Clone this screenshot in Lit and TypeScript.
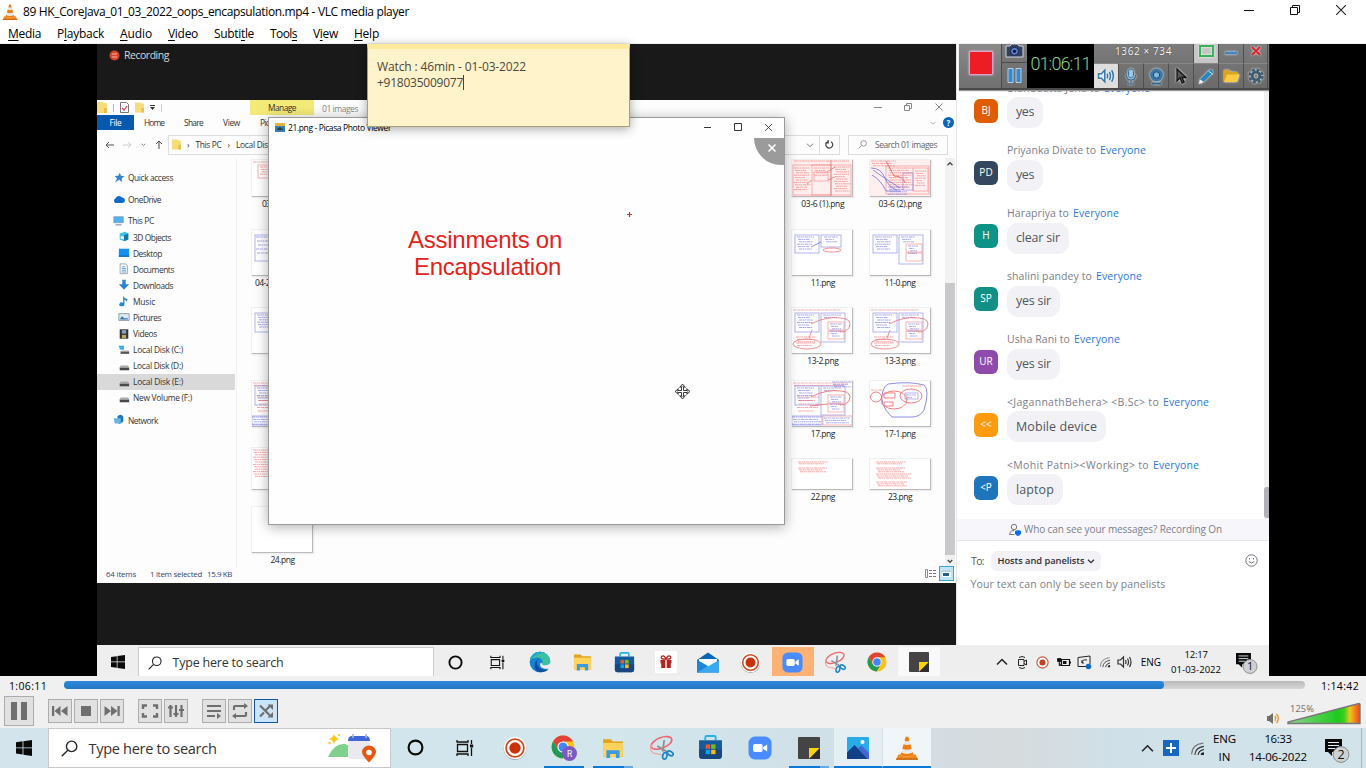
import { LitElement, html, css, svg, nothing } from "lit";
import { customElement, property } from "lit/decorators.js";

/** Text run whose letter spacing is tuned so that it fills a given width. */
@customElement("fit-text")
class FitText extends LitElement {
  @property({ type: Number }) w = 0;
  static styles = css`:host { display: inline-block; white-space: pre; flex: none; }`;
  firstUpdated() {
    const r = document.createRange();
    r.selectNodeContents(this);
    const n = (this.textContent || "").length;
    const nat = r.getBoundingClientRect().width;
    if (n && nat && this.w) {
      this.style.letterSpacing = (this.w - nat) / n + "px";
      this.style.width = this.w + "px";
    }
  }
  render() { return html`<slot></slot>`; }
}

const T = (text: any, w: number, cls = "") => html`<fit-text class=${cls} w=${w}>${text}</fit-text>`;
const I = (w: number, h: number, vb: string, body: any) =>
  html`<svg width=${w} height=${h} viewBox=${vb}>${body}</svg>`;

const cone = (s: number) => I(s, s, "0 0 22 22", svg`
  <path d="M3 17h16l2 4.5H1z" fill="#f08a1c"/><path d="M1 20.6h20v1.2H1z" fill="#c35f08"/>
  <path d="M9.8 .8h2.4L17 17.5q-6 3-12 0z" fill="#e9e9ea"/>
  <path d="M9.8 .8h2.4l1 3.6q-2.2 1-4.4 0z" fill="#ef7d12"/>
  <path d="M7.9 7.6q3.1 1.4 6.2 0l1.2 4q-4.3 2-8.6 0z" fill="#ef7d12"/>
  <path d="M5.6 15.2q5.4 2.6 10.8 0l.6 2.3q-6 3-12 0z" fill="#ef7d12"/>`);
const folder = (w: number, h: number) => I(w, h, "0 0 20 18", svg`
  <path d="M1 1h7l1.6 2H19v14H1z" fill="#e2a21a"/><path d="M1 4.4h18V17H1z" fill="#ffd35c"/>
  <path d="M4 11h12v7h-3.4v-3.6H7.4V18H4z" fill="#3a9be0"/>`);
const miniFolder = (w = 10) => I(w, 11, "0 0 10 11", svg`<path d="M0 0h6l1 1h3v10H0z" fill="#f7dc7c"/><path d="M7 6h3v5H7z" fill="#e8c04e"/>`);
const store = (s: number) => I(s, s, "0 0 24 24", svg`
  <path d="M7 5V2.2Q7 1 8.2 1h7.6Q17 1 17 2.2V5" fill="none" stroke="#25b4e8" stroke-width="1.8"/>
  <path d="M1 5h22v15q0 3-3 3H4q-3 0-3-3z" fill="#155a9c"/><path d="M1 14h22v6q0 3-3 3H4q-3 0-3-3z" fill="#1b3f70" opacity=".7"/>
  <path d="M7.4 9h4.2v4.2H7.4z" fill="#f35325"/><path d="M12.6 9h4.2v4.2h-4.2z" fill="#81bc06"/>
  <path d="M7.4 14.2h4.2v4.2H7.4z" fill="#05a6f0"/><path d="M12.6 14.2h4.2v4.2h-4.2z" fill="#ffba08"/>`);
const zoomIc = (s: number) => I(s, s, "0 0 24 24", svg`
  <rect x=".5" y=".5" width="23" height="23" rx="6.5" fill="#4a8cff"/><rect x="5" y="8" width="9.6" height="8" rx="2" fill="#fff"/>
  <path d="M15.2 11l4-2.6v7.2l-4-2.6z" fill="#fff"/>`);
const sticky = (s: number) => I(s, s, "0 0 22 22", svg`
  <rect width="22" height="22" rx="1" fill="#444"/><path d="M11 11h11L11 22z" fill="#ffd500"/><path d="M22 11L11 22h11z" fill="#2e2e2e"/>`);
const recIc = (s: number) => I(s, s, "0 0 24 24", svg`
  <circle cx="12" cy="12.6" r="11.300" fill="#999"/><circle cx="12" cy="12" r="11.200" fill="#fff"/>
  <circle cx="12" cy="12" r="8.900" fill="none" stroke="#cf4a20" stroke-width="1.800"/><circle cx="12" cy="12" r="5.700" fill="#c93208"/>`);
const snip = (s: number) => I(s, s, "0 0 24 24", svg`
  <g fill="none"><ellipse cx="12" cy="7.6" rx="10.5" ry="5" transform="rotate(-22 12 7.6)" stroke="#ef6470" stroke-width="1.5"/>
  <path d="M3 9Q-1 15 5 17.6L12 19" stroke="#f0a0a4" stroke-width="1.1"/>
  <path d="M8 10.5l10 6M14.6 5l-1.5 11" stroke="#8a9299" stroke-width="1.7"/>
  <ellipse cx="15.2" cy="20" rx="2" ry="3.2" transform="rotate(15 15.2 20)" stroke="#1d86c8" stroke-width="1.7"/>
  <ellipse cx="20.4" cy="17.6" rx="3" ry="1.9" transform="rotate(32 20.4 17.6)" stroke="#1d86c8" stroke-width="1.7"/></g>`);
const chrome = (s: number, badge = false) => I(s, s, badge ? "0 0 26 26" : "0 0 24 24", svg`
  <circle cx="12" cy="12" r="11.4" fill="#fbc116"/>
  <path d="M12 .6A11.4 11.4 0 0 0 2.1 6.3L7 14.6 12 12V6.4h9.9A11.4 11.4 0 0 0 12 .6z" fill="#de4536"/>
  <path d="M2.1 6.3A11.4 11.4 0 0 0 11.6 23.4L16.6 14.8 12 12 7 14.6z" fill="#1f9a57"/>
  <circle cx="12" cy="12" r="5.6" fill="#fff"/><circle cx="12" cy="12" r="4.5" fill="#4285f4"/>
  ${badge ? svg`<circle cx="18.5" cy="18.5" r="7.5" fill="#7e57c2"/><text x="18.5" y="21.6" font-size="8.5" text-anchor="middle" fill="#fff" font-family="Roboto">R</text>` : nothing}`);
const edge = I(22, 22, "0 0 24 24", svg`
  <circle cx="12" cy="12" r="11.3" fill="#1583d3"/><path d="M1 10Q3 1 12 .8q9 .4 11.2 9.4.2 5-5.4 5.4-3.8 0-3.4-2.2 1-3.4-2-5.4Q7 5.400 1 10z" fill="#3cc0a0"/>
  <path d="M1 10Q3 1 12 .8q3 0 5.600 1.500Q9 1 1 10z" fill="#22a5d8"/>
  <path d="M8.500 12q0 8 10 8.500 2 0 3-.8Q18 23.500 12 23.300 5 22 6.400 14q1-4.500 5-5Q8.500 10 8.500 12z" fill="#0f4e9c"/>
  <path d="M14.400 13.400q-.4 2.200 3.400 2.200 4-.2 5.200-3 1 1.400.2 4.400-2 3-6 2.400-6-1-5-6z" fill="#eee"/>`);
const gift = I(22, 22, "0 0 22 22", svg`<path d="M0 0h22v22H0z" fill="#fff"/><path d="M5.500 9h4.800v8H6.200v-4.500h-.7zM11.700 9h4.800v3.500h-.7V17h-4.100z" fill="#b3261e"/>
  <path d="M11 8Q5 8.500 6.500 5.500 9 3.500 11 8q2-4.500 4.500-2.500Q17 8.500 11 8z" fill="none" stroke="#b3261e" stroke-width="1.300"/>`);
const mail = I(22, 21, "0 0 22 21", svg`<path d="M0 8L11 .5 22 8v12.500H0z" fill="#0a66b7"/><path d="M2 7h18v8H2z" fill="#f4f8fc"/>
  <path d="M0 8l11 6.500L22 8v12.500H0z" fill="#38a9ee"/><path d="M0 20.500L11 14 0 8z" fill="#1c86d8"/>`);
const photos = I(22, 22, "0 0 22 22", svg`<rect width="22" height="22" rx="1" fill="#29abe8"/><circle cx="15.500" cy="5" r="2" fill="#fff"/>
  <path d="M0 15.500l7.500-7.500L21 22H0z" fill="#123f86"/><path d="M10.800 11.200l3.700-2.600L22 16v6h-1z" fill="#4865d2"/>`);
const winLogo = (s: number) => I(s, s, "0 0 16 16", svg`<path d="M0 2.200L6.600 1.300v6.200H0zM7.400 1.200L16 0v7.500H7.400zM0 8.300h6.600v6.200L0 13.600zM7.400 8.300H16V16l-8.600-1.200z" fill="#0a0a0a"/>`);
const lens = (s: number, c = "#222", sw = 1.3) => I(s, s, "0 0 16 16", svg`<circle cx="10" cy="6" r="4.900" fill="none" stroke=${c} stroke-width=${sw}/><path d="M6.400 9.600L.7 15.300" stroke=${c} stroke-width=${sw}/>`);
const cortana = (s: number) => I(s, s, "0 0 16 16", svg`<circle cx="8" cy="8" r="6.500" fill="none" stroke="#0a0a0a" stroke-width="2"/>`);
const taskview = (s: number) => I(s, s, "0 0 18 18", svg`<path d="M1.500 5.500h10v7h-10zM1 1v2h11V1M1 17v-2h11v2M15.500 1v4m0 4v8" fill="none" stroke="#111" stroke-width="1.300"/><path d="M14 5.500h3.200v3H14z" fill="#111"/>`);
const chev = (w: number, up: boolean, c = "#222", sw = 1.5) => I(w, w, "0 0 12 12", svg`<path d=${up ? "M1 8.500L6 3.500 11 8.500" : "M1.500 4L6 8.500 10.500 4"} fill="none" stroke=${c} stroke-width=${sw}/>`);
const wifi = (s: number) => I(s, s, "0 0 14 14", svg`<g fill="none" stroke="#777" stroke-width="1"><path d="M1.500 12.500Q2 3 12.500 2"/><path d="M4.500 13Q5 6 13 5" stroke="#333"/><path d="M7.500 13Q8 9 13 8" stroke="#222"/></g><path d="M10 13q0-2.500 3-2.500V13z" fill="#222"/>`);
const notif = (s: number, n: string) => I(s, s, "0 0 25 25", svg`<path d="M0 1h17v13H7v4l-4-4H0z" fill="#0a0a0a"/><path d="M3 4.500h11M3 7.500h11M3 10.500h7" stroke="#e8eef2" stroke-width="1"/>
  <circle cx="16" cy="16.500" r="7.900" fill="#cdd1d4" stroke="#888" stroke-width="1"/><text x="16" y="21" font-size="12.500" text-anchor="middle" fill="#111" font-family="Open Sans">${n}</text>`);
const speaker = (c: string) => I(16, 14, "0 0 16 14", svg`<g fill="none" stroke=${c} stroke-width="1.200"><path d="M1 5h2.500L6.500 2v10l-3-3H1z"/><path d="M8.500 5q1 2 0 4M10.500 3.500q2 3.500 0 7M12.500 2q3 5 0 10"/></g>`);

const sideIcons: Record<string, any> = {
  star: svg`<path d="M8 1l1.300 3.500 4 .6-3.200 2.500.4 4L7 9 2 12.500 4.800 7.500 2 4.800l4.200-.4z" fill="#2f86cf"/>`,
  cloud: svg`<path d="M3 10.500a3 3 0 0 1 0-5.500 4.200 4.200 0 0 1 7.500-.8 3 3 0 0 1 .5 6.300z" fill="#0f6cc4"/>`,
  pc: svg`<path d="M1 2h11v7H1z" fill="#4eb3ee" stroke="#7a97aa" stroke-width=".8"/><path d="M3 11.500h7" stroke="#789" stroke-width="1.200"/>`,
  cube: svg`<path d="M2 3l6-2 4 2v7l-5 2-5-2z" fill="#3cc3e6"/><path d="M7 5l5-2v7l-5 2z" fill="#1579a8"/><path d="M3 6h4v4l-4-1z" fill="#d6f4fb"/>`,
  desk: svg`<path d="M1 2h12v9H1z" fill="#1590ee"/><path d="M1 10h12v1.500H1z" fill="#0c67b4"/>`,
  doc: svg`<path d="M2.500 1h6.500l2 2v9.500H2.500z" fill="#f7f9fb" stroke="#8b98a3" stroke-width=".9"/><path d="M4.500 4.500h4M4.500 6.500h5M4.500 8.500h5M4.500 10.500h5" stroke="#4c9ed0"/>`,
  down: svg`<path d="M5 1h4v5h4l-6 6.500L1 6h4z" fill="#2c83d6"/>`,
  music: svg`<path d="M6 1q1 3 5 4-.5 3-1 3 0-2-2.500-2.500V11a3 2.200 0 1 1-1.500-2z" fill="#1f89d6"/>`,
  pic: svg`<path d="M1 3h12v8H1z" fill="#dbe9f2" stroke="#7d8d99" stroke-width=".9"/><path d="M2.500 9l2-3 3 2.500h4V10h-9z" fill="#3c78a8"/>`,
  video: svg`<path d="M2 1.500h10v11H2z" fill="#333"/><path d="M4.500 2.500h5v4h-5z" fill="#8ba7c0"/><path d="M4.500 8h5v4h-5z" fill="#b8aa62"/>`,
  diskc: svg`<path d="M1 3h6M2 5.500h5" stroke="#27a5e0" stroke-width="2"/><path d="M3 8.500h10v3H3z" fill="#555"/><path d="M4 7.500h8l1 1.500H3z" fill="#aaa"/>`,
  disk: svg`<path d="M2 8.500h11v3.500H2z" fill="#4a4a4a"/><path d="M3 6.500h9l1 2.500H2z" fill="#aaa"/>`,
  net: svg`<path d="M5 3q4-4 7 0v6l-5 3z" fill="#2379b8"/><path d="M1 5h8v6H2z" fill="#64b5ea"/>`,
};
const side: [string, string, number, number][] = [
  ["star", "Quick access", 45, 0], ["cloud", "OneDrive", 33, 6], ["pc", "This PC", 26, 5], ["cube", "3D Objects", 38, 0],
  ["desk", "Desktop", 29, 0], ["doc", "Documents", 41, 0], ["down", "Downloads", 40, 0], ["music", "Music", 22, 0],
  ["pic", "Pictures", 28, 0], ["video", "Videos", 24, 0], ["diskc", "Local Disk (C:)", 50, 0], ["disk", "Local Disk (D:)", 50, 0],
  ["disk", "Local Disk (E:)", 50, 0], ["disk", "New Volume (F:)", 59, 0], ["net", "Network", 30, 6],
];

/* Tiny strokes that stand for handwriting: one dashed line per row of notes. */
const lines = (x: number, y: number, n: number, w: number, c: string, gap = 2.4) =>
  svg`${Array.from({ length: n }, (_, i) => svg`<path d=${`M${x + (i % 3)} ${y + i * gap}h${w - ((i * 5) % 7)}`} stroke=${c} stroke-width="1" stroke-dasharray="3 .5 1.500 .4 2 .6" opacity=".6"/>`)}`;
const R = "#f47070", B = "#6f70dc";
const box = (x: number, y: number, w: number, h: number, c: string) => svg`<rect x=${x} y=${y} width=${w} height=${h} fill="none" stroke=${c} stroke-width=".8" opacity=".65"/>`;
const base = svg`${box(3, 5, 24, 19, B)}${lines(5, 7, 6, 17, B, 2.500)}${box(29, 5, 24, 29, B)}${lines(31, 7, 2, 18, B)}${box(36, 14, 16, 8, R)}${box(36, 23, 16, 8, R)}${lines(38, 16, 6, 12, B)}`;
const art: Record<string, any> = {
  "03-6 (1)": svg`<path d="M0 0h60v37H0z" fill="#fff0ef"/>${box(1, 5, 58, 30, R)}${lines(2, 1, 1, 55, R)}${lines(2, 8, 10, 16, R)}${lines(22, 8, 4, 15, R)}${box(20, 5, 19, 30, R)}${lines(42, 7, 11, 16, R)}${box(22, 12, 14, 9, R)}<path d="M35 12l8-5M36 20l7-3M20 20l-5 4M39 0v36" stroke=${R} stroke-width=".8"/>`,
  "03-6 (2)": svg`<path d="M0 0h60v37H0z" fill="#fff0ef"/>${box(16, 6, 43, 28, R)}${lines(1, 1, 3, 25, R)}${lines(18, 8, 9, 25, R)}${box(43, 8, 15, 23, R)}${lines(45, 11, 7, 12, R)}${box(33, 13, 10, 17, B)}${lines(18, 27, 4, 20, B)}<path d="M1 8q10 0 14 10t12 12M2 15q9 5 14 16h15M3 10l13 9 14 9" fill="none" stroke=${B} stroke-width=".8"/><path d="M16 1l8 15q9 0 11 7" fill="none" stroke=${R}/>`,
  "11": svg`${box(3, 5, 24, 18, B)}${lines(5, 7, 6, 17, B)}${box(29, 5, 20, 12, B)}${lines(32, 7, 3, 14, B)}<ellipse cx="40" cy="20" rx="9" ry="2" fill="none" stroke=${R} stroke-width=".8"/><path d="M19 17l10-5" stroke=${B} stroke-width=".8"/>`,
  "11-0": svg`${box(3, 5, 24, 18, B)}${lines(5, 7, 6, 17, B)}${box(29, 5, 24, 29, B)}${lines(31, 7, 3, 14, B)}${box(36, 14, 16, 8, R)}${box(36, 23, 16, 8, R)}${lines(38, 16, 4, 10, B)}`,
  "13": svg`${lines(1, 2, 1, 48, R)}${base}<path d="M20 22l-3 8M19 16q15-8 30-6 12 1 8 10-4 5-9 4" fill="none" stroke=${R} stroke-width=".8"/>${lines(4, 29, 3, 20, R)}<ellipse cx="15" cy="36" rx="14" ry="5" fill="none" stroke=${R} stroke-width=".8"/>${lines(4, 35, 2, 20, R)}`,
  "17": svg`${lines(1, 2, 2, 55, R)}${lines(40, 1, 3, 20, B)}${base}${lines(5, 16, 5, 22, R, 3.500)}<path d="M19 16q15-8 30-6 12 1 8 10-4 5-9 4M18 25l18-2" fill="none" stroke=${R} stroke-width=".9"/>${box(0, 35, 30, 9, B)}${lines(0, 36, 4, 30, B)}${box(31, 35, 29, 9, R)}${lines(32, 37, 3, 26, B)}`,
  "17-1": svg`<path d="M18 3Q40 0 54 4q6 5 0 25-4 7-12 7H22q-14-13-9-26 1-5 5-7z" fill="none" stroke=${B} stroke-width=".8"/><g fill="none" stroke=${R} stroke-width=".9"><ellipse cx="41" cy="15" rx="11" ry="7"/><ellipse cx="6" cy="16" rx="5.500" ry="5"/><ellipse cx="24" cy="19" rx="13" ry="9"/><path d="M14 12h11v5H14zM14 21h9v4h-9z"/></g>${box(35, 12, 13, 6, B)}${lines(32, 5, 1, 20, R)}${lines(1, 9, 1, 12, R)}${lines(36, 14, 2, 10, B)}`,
  "22": svg`${lines(6, 3, 2, 30, R, 1.800)}${lines(6, 9, 3, 29, R, 1.900)}`,
  "23": svg`${lines(6, 3, 2, 30, R, 1.800)}${lines(6, 9, 3, 29, R, 1.900)}${lines(6, 15, 3, 36, R, 2)}${lines(6, 23, 3, 32, R, 1.900)}`,
  red: svg`${lines(1, 2, 1, 55, R)}${box(6, 5, 30, 13, R)}${lines(8, 7, 4, 20, R)}`,
  blue: svg`${box(3, 5, 24, 26, B)}${lines(4, 7, 5, 18, B, 4)}`,
  blue2: svg`${box(3, 5, 24, 19, B)}${lines(5, 7, 6, 17, B)}`,
  rl: svg`${lines(1, 2, 12, 30, R, 2.400)}`,
  none: nothing,
};
const files: [number, number, string, string, number, number][] = [
  [1, 1, "red", "03", 8, 37], [1, 2, "blue", "04-2", 15, 46], [1, 3, "blue2", "", 1, 46], [1, 4, "17", "", 1, 46], [1, 5, "rl", "", 1, 42], [1, 6, "none", "24.png", 24, 46],
  [8, 1, "03-6 (1)", "03-6 (1).png", 43, 37], [9, 1, "03-6 (2)", "03-6 (2).png", 43, 37],
  [8, 2, "11", "11.png", 24, 46], [9, 2, "11-0", "11-0.png", 31, 46],
  [8, 3, "13", "13-2.png", 31, 46], [9, 3, "13", "13-3.png", 31, 46],
  [8, 4, "17", "17.png", 24, 46], [9, 4, "17-1", "17-1.png", 31, 46],
  [8, 5, "22", "22.png", 24, 31], [9, 5, "23", "23.png", 24, 31],
];

const chat: [string, string, string, number, number, string, number][] = [
  ["#e05c00", "BJ", "Bibhudatta Jena to", 93, 36, "yes", 18], ["#33475e", "PD", "Priyanka Divate to", 89, 36, "yes", 18],
  ["#0e9487", "H", "Harapriya to", 62, 62, "clear sir", 44], ["#129086", "SP", "shalini pandey to", 85, 53, "yes sir", 35],
  ["#8f4bab", "UR", "Usha Rani to", 63, 53, "yes sir", 35], ["#ff9b0c", "<<", "<JagannathBehera> <B.Sc> to", 152, 99, "Mobile device", 81],
  ["#1f75bb", "<P", "<Mohit Patni><Working> to", 142, 56, "laptop", 38],
];

@customElement("app-root")
class AppRoot extends LitElement {
  static styles = css`
    :host { display: flex; flex-direction: column; width: 1366px; height: 768px; overflow: hidden; background: #fff; font-family: "Open Sans", "Noto Sans", sans-serif; color: #000; }
    * { box-sizing: border-box; }
    svg { display: block; flex: none; }
    .row { display: flex; align-items: center; }
    .c { display: flex; align-items: center; justify-content: center; flex: none; }
    .title { height: 23px; padding-left: 2px; font-size: 12px; }
    .title fit-text { margin-left: 5px; }
    .wc { margin-left: auto; display: flex; height: 20px; align-items: center; }
    .wc .c { width: 46px; }
    .title .wc { margin-right: 2px; padding-bottom: 3px; }
    .menu { height: 21px; padding-left: 8px; gap: 16px; font-size: 12px; border-bottom: 1px solid #f0f0f0; }
    .menu u { text-underline-offset: 2px; text-decoration-thickness: 1px; }
    .video { height: 632px; padding: 0 97px; background: #000; position: relative; }
    .stage { width: 1172px; height: 632px; display: grid; grid-template-columns: 859px 313px; grid-template-rows: 601px 31px; }
    .left { background: #191919; display: flex; flex-direction: column; overflow: hidden; }
    .recnote { height: 56px; padding: 6px 0 0 12px; color: #d8d8d8; font-size: 10.500px; display: flex; align-items: flex-start; gap: 4px; line-height: 10px; }
    .exp { height: 483px; background: #fdfdfe; display: flex; flex-direction: column; font-size: 8.400px; color: #333; }
    .e1 { height: 15px; align-items: flex-end; }
    .e1 .q { width: 153px; height: 15px; gap: 6px; }
    .manage { width: 64px; height: 15px; background: #f3ea78; align-self: flex-start; font-weight: 500; }
    .e1 .nm { color: #888; margin: 0 0 1px 8px; font-size: 8.500px; }
    .e1 .wc { height: 14px; align-self: flex-start; margin-right: 2px; }
    .e1 .wc .c { width: 30.500px; }
    .e2 { height: 15px; }
    .file { width: 37px; height: 15px; background: #0759b0; color: #fff; }
    .e2 .tb { margin-left: 10px; }
    .e2 .pt { margin-left: 20px; }
    .help { width: 11px; height: 11px; border-radius: 50%; background: #0a64b8; color: #fff; font-weight: 700; font-size: 8px; margin: 0 2px 0 7px; }
    .e3 { height: 28px; padding-top: 1px; }
    .e3 .nav { width: 71px; padding-left: 8px; gap: 9px; }
    .addr { width: 672px; height: 20px; border: 1px solid #dcdcdc; padding-left: 3px; gap: 6px; }
    .addr .end { margin-left: auto; display: flex; align-items: center; height: 18px; }
    .addr .rf { width: 20px; height: 18px; border-left: 1px solid #dcdcdc; margin-left: 5px; }
    .find { width: 100px; height: 20px; border: 1px solid #dcdcdc; margin-left: 8px; padding-left: 9px; gap: 8px; color: #666; font-size: 8.500px; }
    .body { height: 408px; display: grid; grid-template-columns: 140px 708px 11px; }
    .side { border-right: 1px solid #f1f1f1; padding-top: 11.700px; }
    .si { height: 16.100px; gap: 3px; padding-left: 21px; margin-right: 1px; }
    .si.top { padding-left: 16px; }
    .si.sel { background: #d9d9d9; }
    .grid { display: grid; grid-template-columns: repeat(9, 77.200px); grid-template-rows: 54px 79px 78px 73px 63px 63px; padding-left: 15px; overflow: hidden; height: 410px; }
    .f { display: flex; flex-direction: column; justify-content: flex-end; width: 61px; font-size: 8.500px; color: #222; }
    .th { width: 61px; background: #fff; border: solid #b9b9b9; border-width: 0 1px 1px 0; box-shadow: 1px 1px 1px #ddd; outline: .5px solid #f0f0f0; }
    .lb { height: 15px; padding-bottom: 2px; }
    .f.l .lb { justify-content: flex-end; width: 18px; }
    .sb { background: #f1f1f1; display: flex; flex-direction: column; align-items: center; width: 10px; height: 409px; }
    .sb .sp { height: 113px; }
    .sb .tm { height: 272px; width: 10px; background: #c9c9cb; }
    .sb .c { height: 12px; }
    .st { height: 17px; padding: 0 2px 2px 9px; color: #35476b; font-size: 7.900px; }
    .st .v { margin-left: auto; gap: 3px; }
    .st .on { width: 15px; height: 15px; border: 1px solid #3ba3cf; background: #bfe6f5; }
    .chat { background: #fff; display: flex; flex-direction: column; border-left: 1px solid #e6e6e6; color: #7b7e8b; font-size: 10.500px; position: relative; }
    .msgs { height: 475px; padding: 36px 0 0 17px; position: relative; }
    .m { height: 62.900px; display: grid; grid-template-columns: 33px auto; grid-template-rows: 17px 31px; justify-content: start; }
    .m .n { grid-column: 2; display: flex; gap: 4px; height: 15px; align-items: center; }
    .ev { color: #2a78e0; }
    .av { width: 24px; height: 24px; border-radius: 6px; color: #fff; margin-top: 1.500px; padding-bottom: 2px; font-size: 10px; }
    .bb { height: 31px; border-radius: 11px; background: #f2f2f6; color: #52555e; font-size: 12.500px; padding-bottom: 1.500px; }
    .track { position: absolute; right: 0; top: 46px; width: 5px; height: 429px; background: #f1f1f2; padding-top: 397px; }
    .track i { display: block; height: 31px; background: #b1b1ba; border-radius: 3px 0 0 3px; }
    .who { height: 22px; background: #f7f7fb; border-bottom: 1px solid #e4e4ea; gap: 3px; padding: 0 0 1px 52px; font-size: 10px; }
    .to { height: 39px; padding: 0 11px 0 14px; color: #555; font-size: 10.500px; }
    .pill { height: 20px; width: 110px; border-radius: 6px; background: #f2f2f6; color: #2d2e3a; font-weight: 600; font-size: 9.300px; gap: 2px; margin-left: 7px; }
    .smile { margin-left: auto; }
    .ph { padding-left: 13.500px; font-size: 10.500px; line-height: 10px; margin-top: -1px; }
    .tb1 { grid-column: 1 / 3; background: #eee; display: flex; align-items: center; height: 31px; overflow: hidden; padding-top: 3px; }
    .tb1 > * { flex: none; }
    .tb1 .st1 { width: 41px; }
    .tb1 .sea { width: 296px; height: 31px; background: #fff; border: 1px solid #ccc; border-bottom: 0; gap: 10.500px; padding-left: 9px; font-size: 12.500px; color: #333; }
    .tb1 .c { height: 31px; }
    .t42 { width: 42.100px; }
    .t42.e { margin-left: .800px; }
    .t21 { width: 20.600px; }
    .gap { width: 51.500px; }
    .eng { width: 30.500px; font-size: 10px; }
    .org { background: #fdb273; }
    .wt { background: #f9f9f9; }
    .clk { text-align: center; font-size: 9.500px; line-height: 15px; width: 60px; }
    .clk fit-text { display: block; margin: 0 auto; }
    .nt { width: 36px; padding: 2px 0 0 5px; }
    .viewer { position: absolute; left: 268px; top: 73px; width: 517px; height: 408px; background: #fefefe; border: 1px solid #9a9a9a; box-shadow: 0 2px 12px rgba(0,0,0,.32); display: flex; flex-direction: column; font-size: 8.500px; }
    .vt { height: 20px; padding: 0 0 2px 6px; gap: 3px; }
    .vt .wc { height: 18px; }
    .vt .wc .c { width: 30.500px; }
    .vb { height: 386px; display: flex; justify-content: space-between; align-items: flex-start; position: relative; }
    .as { margin: 88px 0 0 139px; color: #e3221b; font: 24px/27px "Liberation Sans", sans-serif; }
    .as fit-text { display: block; }
    .as .b { margin-left: 6px; }
    .qc { width: 30px; height: 27px; background: #9b9b9b; border-radius: 0 0 0 27px; padding: 0 0 7px 5px; }
    .plus { position: absolute; left: 358px; top: 74px; }
    .move { position: absolute; left: 405px; top: 245px; }
    .note { position: absolute; left: 367px; top: 0; width: 263px; height: 83px; background: #fef3cb; border: 1px solid #a89e78; border-top: 5px solid #ffe99a; box-shadow: 0 2px 10px rgba(0,0,0,.35); padding: 10px 0 0 9px; color: #4d483a; font-size: 12px; line-height: 15.500px; }
    .note fit-text { display: block; }
    .ln { display: flex; }
    .caret { width: 1px; height: 15px; background: #444; }
    .tool { position: absolute; left: 959px; top: 0; width: 310px; height: 46px; background: linear-gradient(#7c7c7c, #6a6a6a); display: flex; border-bottom: 2px solid #4a4a4a; box-shadow: 0 1px 1px #999; }
    .r1 { width: 43px; background: linear-gradient(#8a8a8a, #707070); border-right: 1px solid #4a4a4a; height: 44px; padding: 0 0 6px 2px; }
    .r1 i { width: 22px; height: 22px; background: #ee1c25; box-shadow: 0 0 2px 1px #fbe; }
    .r2 { width: 25px; }
    .r2 .c:first-child { height: 19px; overflow: hidden; padding-bottom: 6px; border-bottom: 1px solid #4b4b4b; }
    .r2 .c:last-child { height: 25px; }
    .lcd { width: 67px; height: 44px; background: #000; color: #86cf8b; font: 300 18px/38px "Roboto", sans-serif; padding-bottom: 5px; }
    .r3 { width: 174px; display: grid; grid-template-columns: 25px 25px 25px 25px 25px 25px 24px; grid-template-rows: 19px 25px; }
    .r3 .c { border-right: 1px solid #4f4f4f; border-top: 1px solid #888; }
    .r3 .c.up { padding-bottom: 6px; border-top: 0; overflow: hidden; }
    .r3 .dim { grid-column: 1 / 5; color: #fff; font-size: 10px; text-shadow: 0 0 1px #222; }
    .r3 .hi { background: #c6c6c6; }
    .r3 .on { background: #dedede; }
    .r3 svg { filter: drop-shadow(0 0 1px #fff); }
    .ctl { height: 52px; background: #f0f0f0; }
    .seek { height: 19px; padding: 0 7px 0 9px; font-size: 10.500px; justify-content: space-between; }
    .bar { width: 1241px; height: 8px; margin-top: -1px; border-radius: 4px; background: linear-gradient(#b9b9b9, #d6d6d6); }
    .bar i { display: block; width: 1100px; height: 8px; border-radius: 4px; background: linear-gradient(#2d88dc, #2277c4); }
    .btns { height: 32px; padding: 0 5px 0 4px; }
    .bt { width: 24px; height: 24px; background: #e1e1e1; border: 1px solid #adadad; margin-right: 2px; }
    .bt.big { width: 30px; height: 30px; margin-right: 14px; }
    .bt.end { margin-right: 14px; }
    .bt.sel { background: #cce4f7; border-color: #0a58a0; }
    .vol { margin-left: auto; display: flex; align-items: flex-end; height: 28px; gap: 6px; }
    .bar2 { height: 40px; background: linear-gradient(90deg, #d3e4ec 0, #d3e6ec 45%, #cfdfe7 62%, #d7dbde 74%, #cfe0e8 82%, #d2e4ea 100%); display: flex; position: relative; }
    .s0 { width: 48px; }
    .s1 { width: 343px; height: 40px; background: #fff; border: 1px solid #c8c8c8; gap: 10.500px; padding: 0 13px 0 12px; font-size: 14.600px; color: #333; }
    .s1 svg:last-child { margin-left: auto; }
    .ap { width: 49px; height: 40px; position: relative; border-bottom: 2px solid transparent; padding-top: 1px; }
    .ap.rc { margin-left: 1px; }
    .ap .u { position: absolute; left: 5px; bottom: -2px; width: 40px; height: 2px; background: #0a78d6; }
    .ap .u.two { background: linear-gradient(90deg, #0a78d6 78%, #65a9e2 78%); }
    .ap.act { background: #e5eef2; border-color: #0a78d6; border-right: 1px solid #d3e2ea; margin-left: 1px; }
    .ap.hot { background: #f0f5f7; border-color: #0a78d6; width: 48px; }
    .b2 { font-size: 11.500px; line-height: 18px; text-align: center; }
    .b2.lang { width: 39px; }
    .b2.time { width: 68px; }
    .b2 fit-text { display: block; margin: 0 auto; }
    .tray { margin-left: auto; display: flex; align-items: center; }
    .plusic { width: 36px; padding-right: 2px; }
    .n2 { width: 49px; padding: 5px 0 0 1px; }
    .show { width: 5px; height: 40px; border-left: 1px solid #a9b7bf; }
    .g14 { width: 14px; } .g5 { width: 5px; }
  `;

  bigBar() {
    const app = (ic: any, cls = "", u: any = nothing) => html`<div class="ap c ${cls}">${ic}${u}</div>`;
    const ul = html`<i class="u"></i>`, ul2 = html`<i class="u two"></i>`;
    return html`<div class="bar2">
      <div class="s0 c">${winLogo(16)}</div>
      <div class="s1 row">${lens(17)}${T("Type here to search", 128)}
        ${I(49, 30, "0 0 49 30", svg`<path d="M0 24Q6 10 17 11q7 1 8 13z" fill="#7ed08c"/><path d="M6 1q1 4 5 5-4 1-5 5-1-4-5-5 4-1 5-5z" fill="#ffc60a"/><circle cx="11" cy="2" r="1" fill="#ffc60a"/><circle cx="1.500" cy="10" r="1.200" fill="#ffc60a"/>
          <rect x="20" y="8" width="22" height="18" rx="3" fill="#e9e9ee"/><path d="M20 8q0-5 4-5h14q4 0 4 5z" fill="#4067d8"/><path d="M25 1v4M38 1v4" stroke="#aab4c8" stroke-width="1.600"/>
          <path d="M41 29.500q-7-7-7-10.500a7 6.500 0 0 1 14 0q0 3.500-7 10.500z" fill="#e8560f"/><circle cx="41" cy="19.500" r="2.800" fill="#fff"/>`)}</div>
      ${app(cortana(17))}${app(taskview(18))}${app(recIc(24), "rc")}${app(chrome(26, true), "", ul)}${app(folder(22, 20), "", ul2)}
      ${app(snip(25))}${app(store(25))}${app(zoomIc(24))}${app(sticky(22), "", ul2)}${app(photos, "act")}${app(cone(24), "hot")}
      <div class="tray">
        <div class="c">${chev(13, true)}</div>
        <div class="c plusic">${I(16, 16, "0 0 16 16", svg`<path d="M0 0h16v16H0z" fill="#1568be"/><path d="M8 3v10M3 8h10" stroke="#fff" stroke-width="2"/>`)}</div>
        <div class="c">${wifi(15)}</div>
        <div class="b2 lang">${T("ENG", 23)}${T("IN", 12)}</div>
        <div class="b2 time">${T("16:33", 27)}${T("14-06-2022", 58)}</div>
        <div class="c n2">${notif(25, "2")}</div>
        <div class="show"></div>
      </div></div>`;
  }

  smallBar() {
    const a = (ic: any, cls = "") => html`<div class="c t42 ${cls}">${ic}</div>`;
    const s = (ic: any) => html`<div class="c t21">${ic}</div>`;
    return html`<div class="tb1">
      <div class="c st1">${winLogo(14)}</div>
      <div class="sea row">${lens(14)}${T("Type here to search", 111)}</div>
      ${a(cortana(15))}${a(taskview(15))}${a(edge, "e")}${a(folder(19, 18))}${a(store(21))}${a(gift)}${a(mail)}${a(recIc(21))}${a(zoomIc(21), "org")}${a(snip(22))}${a(chrome(20))}${a(sticky(20), "wt")}
      <div class="gap"></div>
      ${s(chev(12, true))}
      ${s(I(11, 15, "0 0 11 15", svg`<path d="M1.500 4.500h5.500v6H1.500zM7 6.500l2.500-1.500v5L7 8.500M2 2.500q3-2 6 0M2 12.500q3 2 6 0" fill="none" stroke="#222"/>`))}
      ${s(I(13, 13, "0 0 12 12", svg`<circle cx="6" cy="6" r="5.200" fill="#fff" stroke="#c9553a"/><circle cx="6" cy="6" r="2.800" fill="#c2411f"/>`))}
      ${s(I(14, 11, "0 0 14 11", svg`<path d="M4.500 2.500h8v6h-8z" fill="#eee" stroke="#111" stroke-width="1.200"/><path d="M6 4h3.500v3H6zM13 4.500h1v2h-1z" fill="#111"/><path d="M.5 1.500h3.500v3H.500zM2.200 4.500v4h2" fill="#111" stroke="#111" stroke-width=".8"/>`))}
      ${s(I(15, 15, "0 0 15 15", svg`<path d="M1 2.500l12-1.500v8M1 2.500v9h8M5 8q0-4 5-3M5 5v3h2" fill="none" stroke="#222"/><circle cx="11.500" cy="11.500" r="2.800" fill="#1569c0"/>`))}
      ${s(wifi(12))}${s(speaker("#333"))}
      <div class="c eng">${T("ENG", 20)}</div>
      <div class="clk">${T("12:17", 23)}${T("01-03-2022", 50)}</div>
      <div class="c nt">${notif(22, "1")}</div>
    </div>`;
  }

  explorer() {
    const mn = (c: string) => I(8, 8, "0 0 8 8", svg`<path d="M0 4.500h8" stroke=${c}/>`);
    const mx = (c: string) => I(8, 8, "0 0 8 8", svg`<path d="M.5 2.500h5v5h-5zM2.500 2V.5h5v5H6" fill="none" stroke=${c}/>`);
    const cl = (c: string) => I(8, 8, "0 0 8 8", svg`<path d="M.5.5l7 7m0-7l-7 7" stroke=${c}/>`);
    return html`<div class="exp">
      <div class="e1 row">
        <div class="q row">${miniFolder()}${I(1, 8, "0 0 1 8", svg`<path d="M0 0h1v8H0z" fill="#bbb"/>`)}${I(9, 11, "0 0 9 11", svg`<path d="M.5.5h6l2 2v8h-8z" fill="#fff" stroke="#777"/><path d="M2 6l2 2 3-4" fill="none" stroke="#e04040" stroke-width="1.200"/>`)}${miniFolder(9)}${I(5, 5, "0 0 5 5", svg`<path d="M0 .5h5" stroke="#333"/><path d="M0 2h5L2.500 5z" fill="#333"/>`)}${I(1, 8, "0 0 1 8", svg`<path d="M0 0h1v8H0z" fill="#ccc"/>`)}</div>
        <div class="manage c">${T("Manage", 28)}</div>${T("01 images", 36, "nm")}
        <div class="wc"><div class="c">${mn("#888")}</div><div class="c">${mx("#888")}</div><div class="c">${cl("#888")}</div></div>
      </div>
      <div class="e2 row"><div class="file c">${T("File", 12)}</div>${T("Home", 20, "tb")}<span class="tb"></span>${T("Share", 19, "tb")}<span class="tb"></span>${T("View", 17, "tb")}${T("Pic", 9, "pt")}
        <div class="row smile">${chev(6, false, "#999")}<div class="help c">?</div></div></div>
      <div class="e3 row">
        <div class="nav row">${I(9, 8, "0 0 9 8", svg`<path d="M9 4H1M4 1L1 4l3 3" fill="none" stroke="#555"/>`)}${I(9, 8, "0 0 9 8", svg`<path d="M0 4h8M5 1l3 3-3 3" fill="none" stroke="#ccc"/>`)}${chev(5, false, "#777", 2)}${I(8, 9, "0 0 8 9", svg`<path d="M4 9V1M1 4l3-3 3 3" fill="none" stroke="#444"/>`)}</div>
        <div class="addr row">${miniFolder(9)}<span>›</span>${T("This PC", 26)}<span>›</span>${T("Local Dis", 32)}
          <div class="end">${chev(8, false, "#777")}<div class="rf c">${I(9, 9, "0 0 9 9", svg`<path d="M3 1.500A3.400 3.400 0 1 0 6 1.700M3.200 0v3h-3" fill="none" stroke="#444" stroke-width="1.200"/>`)}</div></div></div>
        <div class="find row">${lens(9, "#888", 1.5)}${T("Search 01 images", 62)}</div>
      </div>
      <div class="body">
        <div class="side">${side.map(([ic, t, w, gap], i) => html`<div class="row si ${i < 3 || i === 14 ? "top" : ""} ${i === 12 ? "sel" : ""}" style="margin-top:${gap}px">${I(12, 12, "0 0 14 14", sideIcons[ic])}${T(t, w)}</div>`)}</div>
        <div class="grid">${files.map(([c, r, k, t, w, h]) => html`<div class="f ${c === 1 && r < 6 ? "l" : ""}" style="grid-column:${c};grid-row:${r}"><div class="th">${I(60, h - 1, `0 0 60 ${h - 1}`, art[k])}</div><div class="lb c">${T(t, w)}</div></div>`)}</div>
        <div class="sb"><div class="c">${chev(6, true, "#444", 2.5)}</div><div class="sp"></div><div class="tm"></div><div class="c">${chev(6, false, "#444", 2.5)}</div></div>
      </div>
      <div class="st row">${T("64 items", 30)}<div class="g14"></div>${T("1 item selected", 52)}<div class="g5"></div>${T("15.9 KB", 25)}
        <div class="v row">${I(11, 9, "0 0 11 9", svg`<path d="M.5.5h2v8h-2z" fill="none" stroke="#888"/><path d="M4 1.500h7M4 4.500h7M4 7.500h7" stroke="#777" stroke-dasharray="3 1"/>`)}<div class="on c">${I(9, 7, "0 0 9 7", svg`<path d="M0 0h9v7H0z" fill="#fff"/><path d="M0 1h9" stroke="#7aa6c8"/><path d="M1 3h6v3H1z" fill="#25608c"/>`)}</div></div></div>
    </div>`;
  }

  chatPane() {
    return html`<div class="chat">
      <div class="msgs">${chat.map(([c, a, n, w, bw, t, tw]) => html`<div class="m"><div class="n">${T(n, w)}${T("Everyone", 46, "ev")}</div><div class="av c" style="background:${c}">${a}</div><div class="bb c" style="width:${bw}px">${T(t, tw)}</div></div>`)}
        <div class="track"><i></i></div></div>
      <div class="who row">${I(12, 13, "0 0 12 13", svg`<circle cx="5" cy="4" r="2.700" fill="none" stroke="#777"/><path d="M.7 11.500q0-4 4.500-4M.5 11.500h5" fill="none" stroke="#777"/><path d="M6 8l3-1 3 1v2.500q-1 2-3 2.500-2-.5-3-2.500z" fill="#0b6cf0"/>`)}${T("Who can see your messages? Recording On", 198)}</div>
      <div class="to row">${T("To:", 13)}<div class="pill c">${T("Hosts and panelists", 87)}${chev(8, false, "#333", 2)}</div>
        <div class="smile">${I(13, 13, "0 0 13 13", svg`<g fill="none" stroke="#70737e"><circle cx="6.500" cy="6.500" r="5.700"/><path d="M4.500 4v1.500M8.500 4v1.500M3.800 7.500q2.700 3 5.400 0"/></g>`)}</div></div>
      <div class="ph">${T("Your text can only be seen by panelists", 195)}</div>
    </div>`;
  }

  recorder() {
    return html`<div class="tool">
      <div class="r1 c"><i></i></div>
      <div class="r2"><div class="c">${I(19, 15, "0 0 19 15", svg`<path d="M1 3h4l1.500-2h6L14 3h4v11H1z" fill="#33405c" stroke="#cfd5e2"/><circle cx="9.500" cy="8.300" r="4" fill="#5b7fd0" stroke="#1b2440"/><circle cx="9.500" cy="8.300" r="1.600" fill="#10182c"/>`)}</div>
        <div class="c">${I(15, 15, "0 0 15 15", svg`<path d="M1 .5h5v14H1zM9 .5h5v14H9z" fill="#3a88c8" stroke="#cfe2f2" stroke-width=".8"/>`)}</div></div>
      <div class="lcd c">${T("01:06:11", 60)}</div>
      <div class="r3">
        <div class="c dim up">${T("1362 × 734", 57)}</div>
        <div class="c hi up">${I(15, 12, "0 0 15 12", svg`<path d="M1 1h13v10H1z" fill="none" stroke="#35b558" stroke-width="2"/>`)}</div>
        <div class="c up">${I(12, 12, "0 0 12 12", svg`<path d="M0 8h12" stroke="#3f86c2" stroke-width="2.500"/>`)}</div>
        <div class="c up">${I(10, 10, "0 0 10 10", svg`<path d="M1 1l8 8m0-8L1 9" stroke="#e0202a" stroke-width="2"/>`)}</div>
        <div class="c on">${I(19, 16, "0 0 16 14", svg`<g fill="none" stroke="#3a78a8" stroke-width="1.400"><path d="M1 5h2.500L6.500 2v10l-3-3H1z"/><path d="M8.500 5q1 2 0 4M10.500 3.500q2 3.500 0 7M12.500 2q3 5 0 10"/></g>`)}</div>
        <div class="c">${I(12, 17, "0 0 12 17", svg`<rect x="3.500" y="1" width="5" height="9" rx="2.500" fill="#9cc8e8" stroke="#346f9c"/><path d="M1.500 7q0 5 4.500 5t4.500-5M6 12v3.500M3 16h6" fill="none" stroke="#346f9c" stroke-width="1.200"/>`)}</div>
        <div class="c">${I(15, 17, "0 0 15 17", svg`<circle cx="7.500" cy="7" r="6.500" fill="#3d78aa"/><circle cx="7.500" cy="7" r="3.200" fill="#7fb8de" stroke="#1c4668"/><path d="M3 15.500h9" stroke="#35688f" stroke-width="2"/>`)}</div>
        <div class="c">${I(11, 16, "0 0 11 16", svg`<path d="M1 1v12l3-3 2.200 5 2-1L6 9.500h4z" fill="#555" stroke="#111" stroke-width="1.300"/>`)}</div>
        <div class="c">${I(17, 17, "0 0 17 17", svg`<path d="M2 11.500L11.500 2q3-1 3.500 2.500L5.500 14z" fill="#2288c4"/><path d="M2 11.500L5.500 14l-4.500 2z" fill="#f2f2f2"/><path d="M10.500 3l4 3" stroke="#cfe9f8"/>`)}</div>
        <div class="c">${I(17, 14, "0 0 17 14", svg`<path d="M1 1h5l1.500 2H14v10H1z" fill="#d9a520"/><path d="M4 5.500h12.500L14 13H1z" fill="#fbcb45"/>`)}</div>
        <div class="c">${I(16, 16, "0 0 16 16", svg`<circle cx="8" cy="8" r="6.300" fill="none" stroke="#3f5c70" stroke-width="2.600" stroke-dasharray="2.900 2.048"/><circle cx="8" cy="8" r="3.900" fill="none" stroke="#3f5c70" stroke-width="3"/>`)}</div>
      </div></div>`;
  }

  render() {
    const g = "#6f6f6f";
    const b = (body: any, cls = "") => html`<div class="bt c ${cls}">${I(18, 16, "0 0 18 16", body)}</div>`;
    const x = (s: number) => I(s, s, "0 0 10 10", svg`<path d="M0 0l10 10m0-10L0 10" stroke="#222" stroke-width="1.100"/>`);
    return html`
      <div class="title row">${cone(16)}${T("89 HK_CoreJava_01_03_2022_oops_encapsulation.mp4 - VLC media player", 386)}
        <div class="wc"><div class="c">${I(10, 10, "0 0 10 10", svg`<path d="M0 5.500h10" stroke="#111"/>`)}</div><div class="c">${I(10, 10, "0 0 10 10", svg`<path d="M.5 2.500h7v7h-7zM2.500 2.500v-2h7v7h-2" fill="none" stroke="#111"/>`)}</div><div class="c">${x(10)}</div></div></div>
      <div class="menu row">
        ${T(html`<u>M</u>edia`, 33)}${T(html`P<u>l</u>ayback`, 47)}${T(html`<u>A</u>udio`, 32)}${T(html`<u>V</u>ideo`, 30)}${T(html`Subti<u>t</u>le`, 40)}${T(html`Tool<u>s</u>`, 27)}${T(html`V<u>i</u>ew`, 25)}${T(html`<u>H</u>elp`, 25)}</div>
      <div class="video">
        <div class="stage">
          <div class="left"><div class="recnote">${I(11, 11, "0 0 11 11", svg`<circle cx="5.500" cy="5.500" r="5" fill="#d8452f"/><path d="M3 4h5M3 7h5" stroke="#f3b7aa"/>`)}${T("Recording", 45)}</div>${this.explorer()}</div>
          ${this.chatPane()}${this.smallBar()}
        </div>
        <div class="viewer">
          <div class="vt row">${I(10, 9, "0 0 10 9", svg`<path d="M0 0h10v9H0z" fill="#3f7fb0"/><path d="M0 0h10v3H0z" fill="#e8b53c"/><path d="M2 6l3-2 4 3H2z" fill="#244"/>`)}${T("21.png - Picasa Photo Viewer", 103)}
            <div class="wc"><div class="c">${I(7, 7, "0 0 7 7", svg`<path d="M0 3.500h7" stroke="#333"/>`)}</div><div class="c">${I(8, 8, "0 0 8 8", svg`<path d="M.5.5h7v7h-7z" fill="none" stroke="#333"/>`)}</div><div class="c">${x(7)}</div></div></div>
          <div class="vb"><div class="as">${T("Assinments on", 154)}${T("Encapsulation", 147, "b")}</div>
            <div class="qc c">${I(8, 8, "0 0 8 8", svg`<path d="M.5.5l7 7m0-7l-7 7" stroke="#fff" stroke-width="1.500"/>`)}</div>
            <div class="plus">${I(5, 5, "0 0 5 5", svg`<path d="M2.500 0v5M0 2.500h5" stroke="#c03030" stroke-width="1.200"/>`)}</div>
            <div class="move">${I(17, 17, "0 0 17 17", svg`<path d="M8.500 1l2.500 3H9.500v3.500H13V6l3 2.500-3 2.500V9.500H9.500V13H11l-2.500 3L6 13h1.500V9.500H4V11L1 8.500 4 6v1.500h3.500V4H6z" fill="#fff" stroke="#222" stroke-width=".9"/><circle cx="8.500" cy="8.500" r="5.200" fill="none" stroke="#555" stroke-width=".7"/>`)}</div></div>
        </div>
        <div class="note">${T("Watch : 46min - 01-03-2022", 149)}<div class="ln">${T("+918035009077", 86)}<div class="caret"></div></div></div>
        ${this.recorder()}
      </div>
      <div class="ctl">
        <div class="seek row">${T("1:06:11", 38)}<div class="bar"><i></i></div>${T("1:14:42", 38)}</div>
        <div class="btns row">
          <div class="bt big c">${I(16, 18, "0 0 16 18", svg`<path d="M0 0h6v18H0zM10 0h6v18h-6z" fill=${g}/>`)}</div>
          ${b(svg`<path d="M1 3h2.200v10H1zM9.500 3v10L3.500 8zM16.500 3v10L10 8z" fill=${g}/>`)}${b(svg`<path d="M4 3h10v10H4z" fill=${g}/>`)}${b(svg`<path d="M1.500 3v10L8 8zM8 3v10l6.500-5zM14.500 3h2.200v10h-2.200z" fill=${g}/>`, "end")}
          ${b(svg`<path d="M2 6V2.500h4M12 2.500h4V6M16 10v3.500h-4M6 13.500H2V10" fill="none" stroke=${g} stroke-width="2.400"/>`)}${b(svg`<path d="M3.500 2v12M9 2v12M14.500 2v12M1 4.500h5M6.500 11h5M12 7h5" fill="none" stroke=${g} stroke-width="2.200"/>`, "end")}
          ${b(svg`<path d="M2 3h14M2 8h14M2 13h8" stroke=${g} stroke-width="2.200"/><path d="M12 10l4 3-4 3z" fill=${g}/>`)}${b(svg`<path d="M3 7V4q0-1 1-1h10M15 9v3q0 1-1 1H4" fill="none" stroke=${g} stroke-width="2.200"/><path d="M13 0l4 3-4 3zM5 10l-4 3 4 3z" fill=${g}/>`)}
          ${b(svg`<path d="M3 2.500l10 10M3 13.500l4-4M9 7l4-4" stroke=${g} stroke-width="2.200"/><path d="M10.500 1.500H16V7zM16 14.500h-5.500L16 9z" fill=${g}/>`, "sel")}
          <div class="vol">${I(15, 13, "0 0 15 13", svg`<path d="M1 4h2l4-3v11L3 9H1z" fill="#6f6f6f"/><path d="M9 4q1.500 2.500 0 5M10.500 2q3.500 4.500 0 9" fill="none" stroke="#f39a1e" stroke-width="1.500"/>`)}
            ${I(74, 23, "0 0 74 23", svg`<defs><linearGradient id="v"><stop offset="0" stop-color="#8fd48f"/><stop offset=".7" stop-color="#1ccb1c"/><stop offset=".78" stop-color="#3bd01b"/><stop offset=".86" stop-color="#f0c61b"/><stop offset="1" stop-color="#f2421b"/></linearGradient></defs>
              <path d="M1 21.500V20L72 1.500q1 0 1 1v19z" fill="url(#v)" stroke="#777" stroke-width="1.400"/><text x="3" y="9.500" font-size="9.300" fill="#777" textLength="24" font-family="Noto Sans">125%</text>`)}</div>
        </div>
      </div>
      ${this.bigBar()}`;
  }
}
